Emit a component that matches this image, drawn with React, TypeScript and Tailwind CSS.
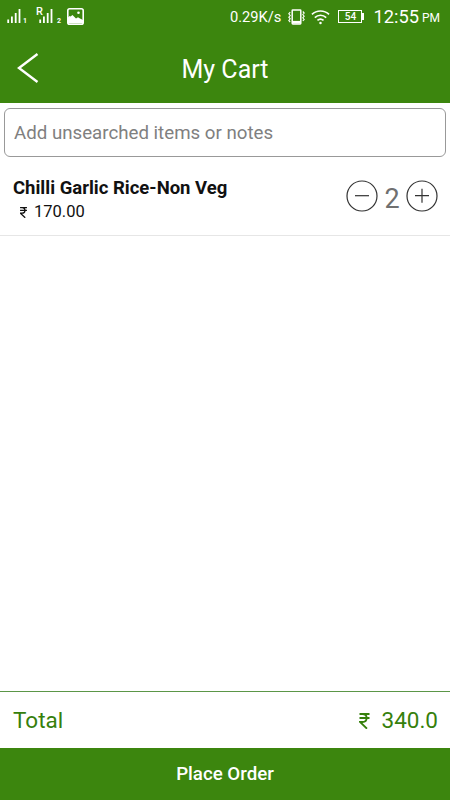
import { useState } from "react";

interface CartItem {
  id: string;
  name: string;
  price: number;
  quantity: number;
}

const initialItems: CartItem[] = [
  { id: "chilli-garlic-rice", name: "Chilli Garlic Rice-Non Veg", price: 170, quantity: 2 },
];

function SignalBars() {
  return (
    <svg width="15" height="16" viewBox="0 0 15 16" fill="currentColor">
      <rect x="0.3" y="10.5" width="1.8" height="3.5" />
      <rect x="4" y="7.5" width="1.8" height="6.5" />
      <rect x="7.8" y="4" width="1.8" height="10" />
      <rect x="11.6" y="0" width="1.8" height="14" />
    </svg>
  );
}

function PictureIcon() {
  return (
    <svg width="17" height="17" viewBox="0 0 17 17">
      <rect x="0.8" y="0.8" width="15.4" height="15.4" rx="1.8" fill="none" stroke="currentColor" strokeWidth="1.6" />
      <path d="M1 9.5 L2.5 8 L3.5 8.6 L5.5 7 L9 10.5 L11 9.2 L13 10.5 L16 12 V15.5 H1 Z" fill="currentColor" />
      <circle cx="11.5" cy="4.8" r="1.3" fill="currentColor" />
    </svg>
  );
}

function VibrateIcon() {
  return (
    <svg width="17" height="16" viewBox="0 0 17 16" fill="none" stroke="currentColor">
      <rect x="4.2" y="0.9" width="8.6" height="14" rx="0.6" strokeWidth="1.5" />
      <path d="M4.2 13.2 H12.8" strokeWidth="2.6" />
      <path d="M2.2 3.2 L0.8 4.8 L2.2 6.5 L0.8 8.2 L2.2 9.8 L0.8 11.5 L2.2 13" strokeWidth="1.1" />
      <path d="M14.8 2.5 L16.2 4 L14.8 5.6 L16.2 7.2 L14.8 8.8 L16.2 10.4 L14.8 12" strokeWidth="1.1" />
    </svg>
  );
}

function WifiIcon() {
  return (
    <svg width="19" height="16" viewBox="0 0 20 16" fill="none" stroke="currentColor" strokeWidth="1.7">
      <path d="M1 5.3 C6 0.4 14 0.4 19 5.3" />
      <path d="M4 8.6 C7.4 5.3 12.6 5.3 16 8.6" />
      <path d="M6.8 11.6 C8.7 9.9 11.3 9.9 13.2 11.6" />
      <circle cx="10" cy="14.4" r="1.3" fill="currentColor" stroke="none" />
    </svg>
  );
}

function StatusBar() {
  return (
    <div className="flex h-[33px] items-center justify-between pr-[10px] pl-[7px]">
      <div className="flex items-center">
        <div className="flex w-[30px] items-end">
          <SignalBars />
          <span className="ml-px text-[7px] leading-[7px] font-bold">1</span>
        </div>
        <div className="relative flex w-[30px] items-end pl-[2px]">
          <span className="absolute -top-[3px] -left-px text-[11px] leading-[11px] font-medium">R</span>
          <SignalBars />
          <span className="ml-[3px] text-[7px] leading-[7px] font-bold">2</span>
        </div>
        <PictureIcon />
      </div>
      <div className="flex items-center">
        <span className="text-[14.7px] leading-5">0.29K/s</span>
        <span className="ml-[7px]"><VibrateIcon /></span>
        <span className="ml-[6px]"><WifiIcon /></span>
        <div className="ml-[8px] flex items-center">
          <span className="flex h-[13px] w-[24px] items-center justify-center border border-white text-[10px] leading-none font-medium">54</span>
          <span className="h-[7px] w-[2px] bg-white" />
        </div>
        <span className="ml-[9px] text-[18.3px] leading-6">12:55</span>
        <span className="mt-[3px] ml-[3px] text-[12px] leading-4">PM</span>
      </div>
    </div>
  );
}

function RupeeIcon({ className }: { className?: string }) {
  return (
    <svg viewBox="0 0 10 16" fill="none" stroke="currentColor" strokeWidth="1.8" className={className}>
      <path d="M0 1 H10 M0 5 H10 M0 1 H3 C8.5 1 8.5 9 3 9 H0.5 L7.5 15.7" />
    </svg>
  );
}

function QuantityButton({ label, plus, onClick }: { label: string; plus?: boolean; onClick: () => void }) {
  return (
    <button aria-label={label} onClick={onClick}>
      <svg width="32" height="32" viewBox="0 0 32 32" fill="none" stroke="#333333">
        <circle cx="16" cy="16" r="15" strokeWidth="1.2" />
        <path d={plus ? "M9 15.7 H23 M16 8.7 V22.7" : "M9 15.7 H23"} strokeWidth="1.2" />
      </svg>
    </button>
  );
}

export default function App() {
  const [items, setItems] = useState<CartItem[]>(initialItems);

  const changeQuantity = (id: string, delta: number) => {
    setItems(
      items.map((item) =>
        item.id === id ? { ...item, quantity: Math.max(0, item.quantity + delta) } : item
      )
    );
  };

  const total = items.reduce((sum, item) => sum + item.price * item.quantity, 0);

  return (
    <div className="flex h-screen flex-col bg-white font-[Roboto,sans-serif]">
      <header className="h-[103px] bg-[#3c860e] text-white">
        <StatusBar />
        <div className="grid h-[70px] grid-cols-[48px_1fr_48px] items-center">
          <button aria-label="Back" className="pl-[17px]">
            <svg width="22" height="30" viewBox="0 0 22 30" fill="none" stroke="currentColor" strokeWidth="2.4">
              <path d="M20.5 1 L2 15 L20.5 29" />
            </svg>
          </button>
          <h1 className="pt-[3px] text-center text-[25px]">My Cart</h1>
        </div>
      </header>

      <main className="flex-1">
        <div className="px-1 pt-[5px]">
          <input
            type="text"
            placeholder="Add unsearched items or notes"
            className="block h-[49px] w-full rounded-md border border-[#999999] px-[9px] pt-px text-[18.7px] placeholder:text-[#808080] focus:outline-none"
          />
        </div>

        {items.map((item) => (
          <div
            key={item.id}
            className="flex h-[79px] items-center justify-between border-b border-[#e6e6e6] pr-3 pl-[13px]"
          >
            <div className="pt-2">
              <h2 className="text-[18.5px] leading-6 font-bold text-[#111111]">{item.name}</h2>
              <p className="flex items-center pl-[7px] text-[16.5px] leading-6 text-[#111111]">
                <RupeeIcon className="mt-px mr-[7px] h-[11px] w-[7px]" />
                {item.price.toFixed(2)}
              </p>
            </div>
            <div className="flex items-center">
              <QuantityButton label="Decrease quantity" onClick={() => changeQuantity(item.id, -1)} />
              <span className="w-7 pt-[6px] text-center text-[27px] leading-8 text-[#707070]">{item.quantity}</span>
              <QuantityButton plus label="Increase quantity" onClick={() => changeQuantity(item.id, 1)} />
            </div>
          </div>
        ))}
      </main>

      <div className="flex h-[57px] items-center justify-between border-t border-[#5b9648] pt-[2px] pr-3 pl-[13px] text-[22.5px] text-[#36800c]">
        <span>Total</span>
        <span className="flex items-center">
          <RupeeIcon className="mr-[11px] h-4 w-[11px]" />
          {total.toFixed(1)}
        </span>
      </div>
      <button className="h-[52px] bg-[#3c860e] text-[18.7px] font-medium text-white">Place Order</button>
    </div>
  );
}
